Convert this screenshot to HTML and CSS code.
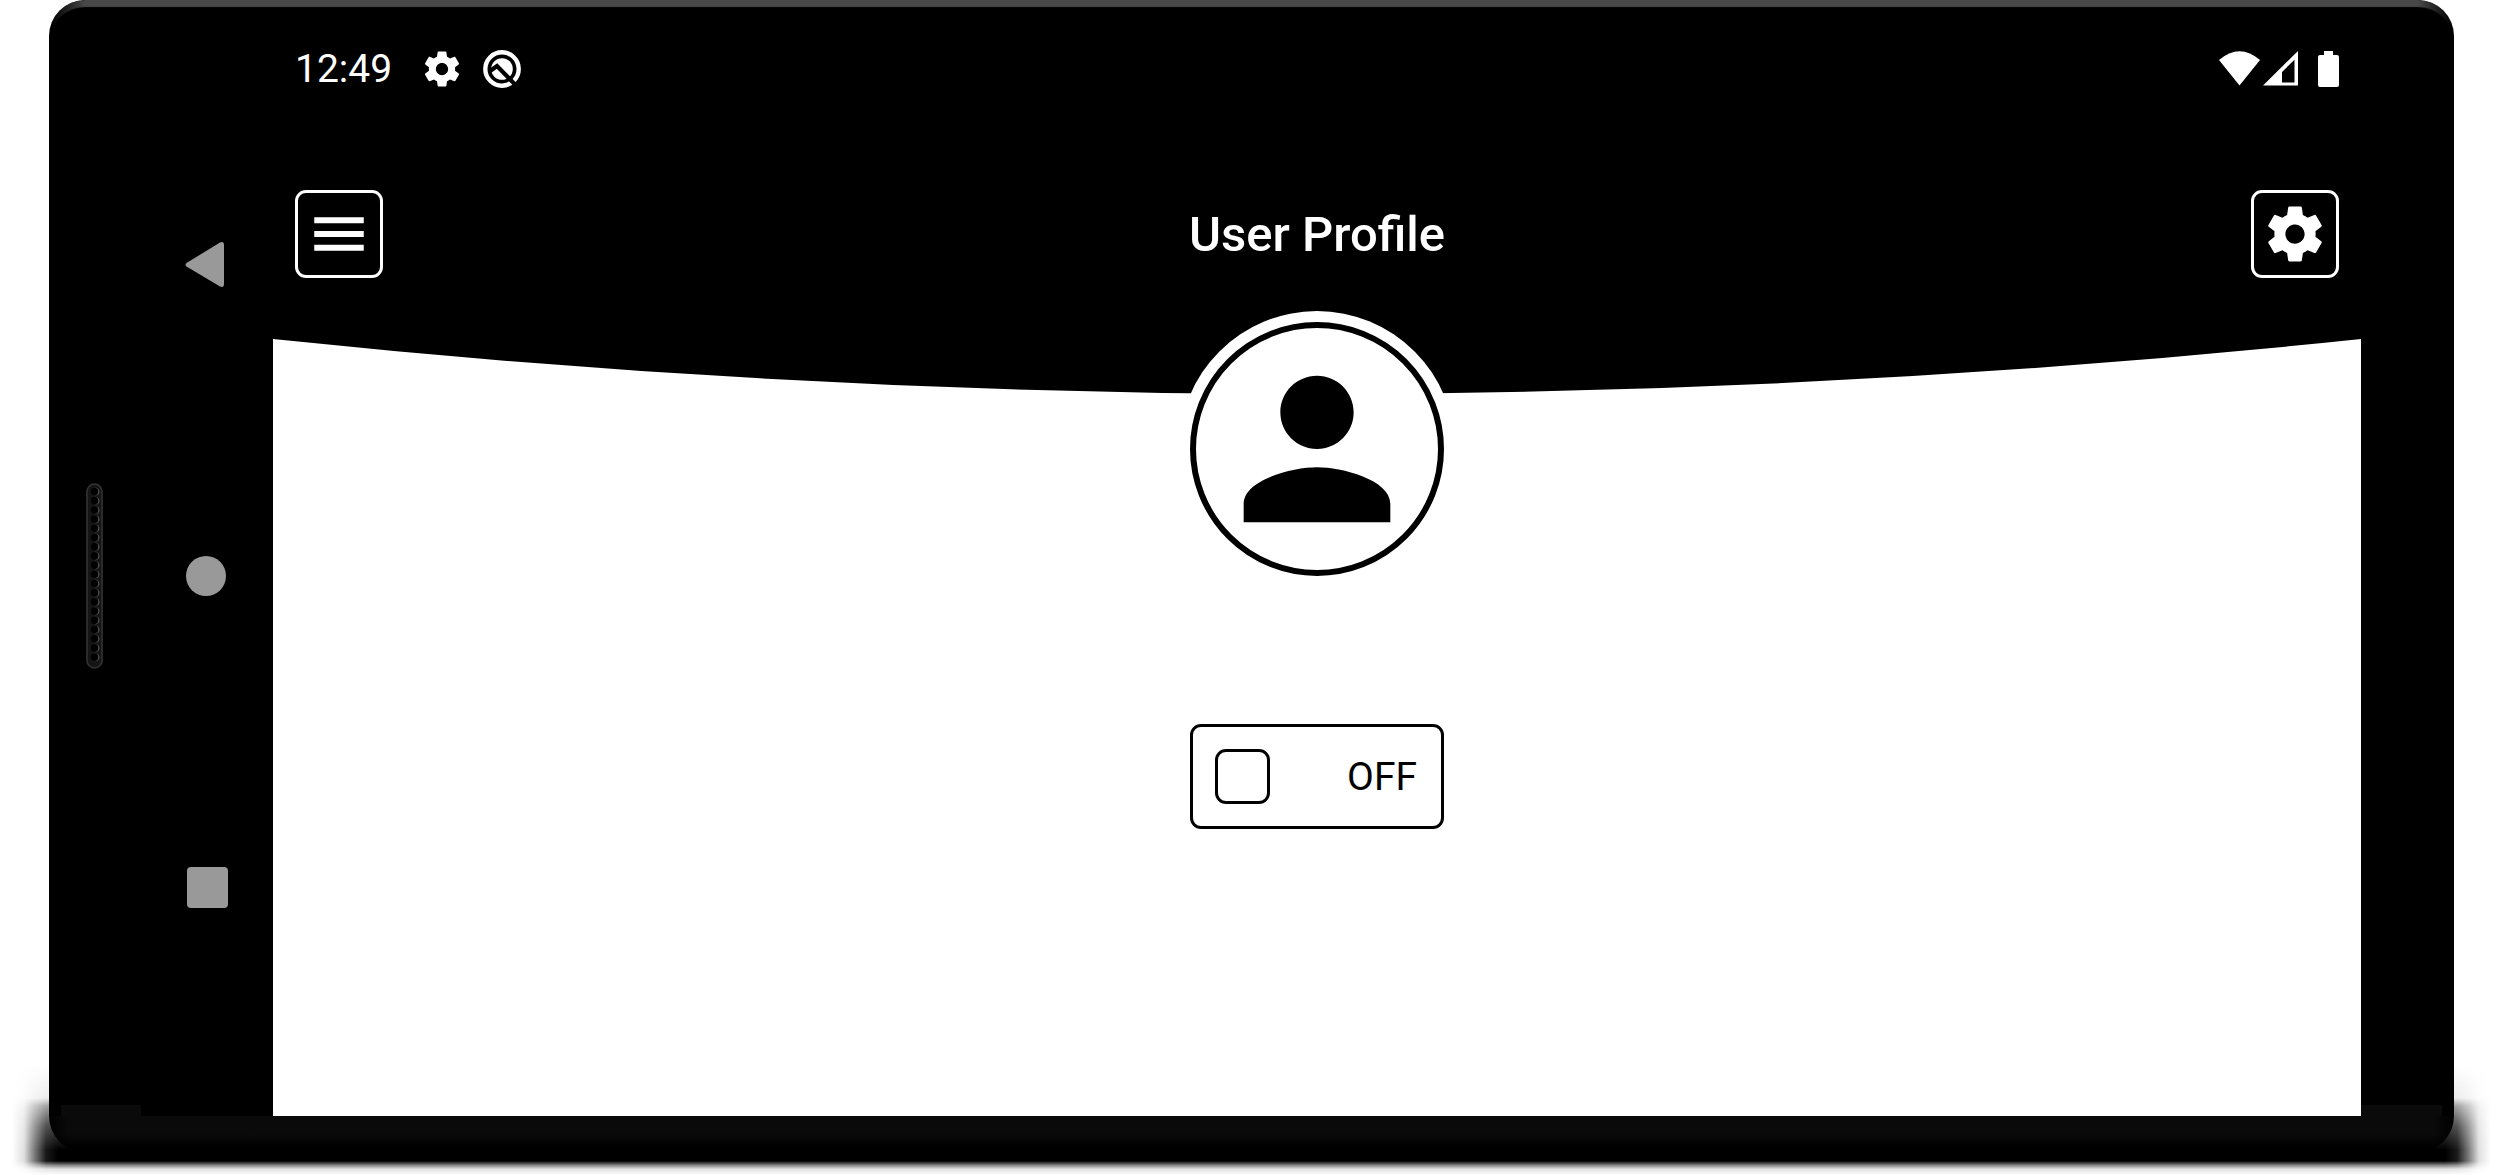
FILE: index.html
```html
<!DOCTYPE html>
<html lang="en">
<head>
<meta charset="utf-8">
<title>User Profile</title>
<link rel="stylesheet" href="styles.css">
</head>
<body>
<svg class="sprite" aria-hidden="true">
  <symbol id="gear" viewBox="0 0 24 24"><path d="M19.43 12.98c.04-.32.07-.64.07-.98s-.03-.66-.07-.98l2.11-1.65c.19-.15.24-.42.12-.64l-2-3.46c-.12-.22-.39-.3-.61-.22l-2.49 1c-.52-.4-1.08-.73-1.69-.98l-.38-2.65C14.46 2.18 14.25 2 14 2h-4c-.25 0-.46.18-.49.42l-.38 2.65c-.61.25-1.17.59-1.69.98l-2.49-1c-.23-.09-.49 0-.61.22l-2 3.46c-.13.22-.07.49.12.64l2.11 1.65c-.04.32-.07.65-.07.98s.03.66.07.98l-2.11 1.65c-.19.15-.24.42-.12.64l2 3.46c.12.22.39.3.61.22l2.49-1c.52.4 1.08.73 1.69.98l.38 2.65c.03.24.24.42.49.42h4c.25 0 .46-.18.49-.42l.38-2.65c.61-.25 1.17-.59 1.69-.98l2.49 1c.23.09.49 0 .61-.22l2-3.46c.12-.22.07-.49-.12-.64l-2.11-1.65zM12 15.5c-1.93 0-3.5-1.57-3.5-3.5s1.57-3.5 3.5-3.5 3.5 1.57 3.5 3.5-1.57 3.5-3.5 3.5z"/></symbol>
</svg>
<div class="shadow"></div>
<div class="device">
  <div class="bezel bezel-left">
    <svg class="speaker" viewBox="0 0 17 186" aria-hidden="true">
      <defs>
        <pattern id="holes" x="0" y="4" width="17" height="9.2" patternUnits="userSpaceOnUse">
          <circle cx="9.4" cy="4.6" r="4" fill="#666"/>
          <circle cx="8.6" cy="4.6" r="3.8" fill="#000"/>
        </pattern>
      </defs>
      <rect x="1" y="1" width="15" height="184" rx="7.5" fill="#151515" stroke="#333" stroke-width="1.6"/>
      <rect x="0" y="4" width="17" height="174.8" fill="url(#holes)"/>
    </svg>
  </div>
  <nav class="system-nav" aria-label="System">
    <button class="nav-button" aria-label="Back"><svg class="nav-icon" viewBox="0 0 44 46"><path d="M1.500 22 L35 1.500 Q39 0 39 4 V43 Q39 47 35 45.500 L1.500 25.500 Q-.5 23.700 1.500 22Z"/></svg></button>
    <button class="nav-button" aria-label="Home"><svg class="nav-icon" viewBox="0 0 44 46"><circle cx="21" cy="23" r="20"/></svg></button>
    <button class="nav-button" aria-label="Recent apps"><svg class="nav-icon" viewBox="0 0 44 46"><rect x="2" y="2" width="41" height="41" rx="4"/></svg></button>
  </nav>
  <main class="screen">
    <header class="header">
      <div class="status-bar">
        <time class="clock">12:49</time>
        <svg class="status-gear"><use href="#gear"/></svg>
        <svg class="status-app" viewBox="0 0 38 38">
          <circle cx="19" cy="19" r="16.700" fill="none" stroke="#fff" stroke-width="4.400"/>
          <circle cx="19" cy="19" r="10.800" fill="#fff"/>
          <path d="M6.500 21.500 L14 16 L33 35.500" fill="none" stroke="#000" stroke-width="4.200"/>
        </svg>
        <svg class="status-system" viewBox="0 0 120 36">
          <path d="M0 9 Q20.500 -8.500 41 9 L20.500 34.500Z"/>
          <path fill-rule="evenodd" d="M44 34.500 L79 0 V34.500Z M63 31.500 H75.500 V8.800 L63 21Z"/>
          <path d="M105 0 H114 V4 H118 Q120 4 120 6 V34 Q120 36 118 36 H101 Q99 36 99 34 V6 Q99 4 101 4 H105Z"/>
        </svg>
      </div>
      <div class="app-bar">
        <button class="icon-button" aria-label="Menu"><svg class="icon" viewBox="0 0 24 24"><path d="M3 18.100h18v-2.200H3v2.200zm0-5h18v-2.200H3v2.200zm0-7.200v2.200h18V5.900H3z"/></svg></button>
        <h1 class="title">User Profile</h1>
        <button class="icon-button" aria-label="Settings"><svg class="icon"><use href="#gear"/></svg></button>
      </div>
    </header>
    <svg class="curve" viewBox="0 0 100 55" preserveAspectRatio="none" aria-hidden="true"><path d="M0 0 Q50 110 100 0Z"/></svg>
    <div class="avatar">
      <div class="avatar-ring">
        <svg class="person" viewBox="0 0 24 24" role="img" aria-label="Profile picture"><path d="M12 12c2.210 0 4-1.790 4-4s-1.790-4-4-4-4 1.790-4 4 1.790 4 4 4zm0 2c-2.670 0-8 1.340-8 4v2h16v-2c0-2.660-5.330-4-8-4z"/></svg>
      </div>
    </div>
    <label class="toggle"><input class="toggle-box" type="checkbox"><span>OFF</span></label>
  </main>
  <div class="bezel"></div>
  <div class="chin"></div>
</div>
</body>
</html>
```
FILE: styles.css
```css
* { box-sizing: border-box; }

body {
  margin: 0;
  min-height: 100vh;
  padding: 0 49px 23px;
  display: flex;
  position: relative;
  background: #fff;
  font-family: Roboto, "Liberation Sans", sans-serif;
}

.sprite { position: absolute; width: 0; height: 0; }

/* Ground shadow that spills out under the phone */
.shadow {
  position: absolute;
  left: 12px;
  right: 12px;
  bottom: 0;
  height: 115px;
  background: #000;
  -webkit-mask-image:
    linear-gradient(to right, transparent, rgba(0,0,0,.12) 12px, rgba(0,0,0,.5) 22px, rgba(0,0,0,.9) 34px, #000 46px, #000 calc(100% - 46px), rgba(0,0,0,.9) calc(100% - 34px), rgba(0,0,0,.5) calc(100% - 22px), rgba(0,0,0,.12) calc(100% - 12px), transparent),
    linear-gradient(to bottom, transparent 5px, rgba(0,0,0,.08) 38px, rgba(0,0,0,.4) 46px, rgba(0,0,0,.75) 66px, #000 90px, #000 101px, rgba(0,0,0,.5) 105px, rgba(0,0,0,.12) 109px, transparent 115px);
  mask-composite: intersect;
}

.device {
  flex: 1;
  position: relative;
  display: grid;
  grid-template-columns: 92px 132px 1fr 93px;
  grid-template-rows: 1fr 36px;
  overflow: hidden;
  border-radius: 36px;
  background: #000;
}

/* Lit top edge, fading away round the corners */
.device::before {
  content: "";
  position: absolute;
  inset: 0;
  border-radius: 36px;
  box-shadow: inset 0 7px 1px #484848;
  -webkit-mask-image: linear-gradient(to right, transparent 2px, #000 36px, #000 calc(100% - 36px), transparent calc(100% - 2px));
  pointer-events: none;
}

.bezel {
  background: linear-gradient(#0a0a0a, #0a0a0a) left bottom / calc(100% - 12px) 11px no-repeat;
}

.bezel-left {
  display: flex;
  align-items: center;
  justify-content: center;
  padding: 36px 2px 0 0;
  background-position: right bottom;
}

.speaker { width: 17px; height: 186px; }

.system-nav {
  display: flex;
  flex-direction: column;
  align-items: center;
  justify-content: center;
  gap: 112px;
  padding-top: 36px;
}

.nav-button {
  width: 100px;
  height: 200px;
  padding: 0;
  border: 0;
  background: none;
  display: flex;
  align-items: center;
  justify-content: center;
}

.nav-icon { width: 44px; height: 46px; fill: #999; }

.screen {
  display: flex;
  flex-direction: column;
  align-items: center;
  background: #fff;
}

.header {
  align-self: stretch;
  padding: 36px 22px 61px;
  background: #000;
  color: #fff;
}

.status-bar {
  display: flex;
  align-items: center;
  height: 66px;
  margin-bottom: 88px;
  fill: #fff;
}

.clock { font-size: 39px; line-height: 46px; }
.status-gear { width: 42px; height: 42px; margin-left: 29px; }
.status-app { width: 38px; height: 38px; margin-left: 20px; }
.status-system { width: 120px; height: 36px; margin-left: auto; }

.app-bar {
  display: flex;
  align-items: center;
  justify-content: space-between;
}

.icon-button {
  width: 88px;
  height: 88px;
  padding: 0;
  display: flex;
  align-items: center;
  justify-content: center;
  border: 3px solid #fff;
  border-radius: 11px;
  background: none;
}

.icon { width: 66px; height: 66px; fill: #fff; }

.title {
  margin: 0;
  font-size: 49px;
  line-height: 59px;
  font-weight: 500;
}

.curve { display: block; width: 100%; height: 55px; fill: #000; }

.avatar {
  margin-top: -83px;
  padding: 11px;
  border-radius: 50%;
  background: #fff;
  position: relative;
}

.avatar-ring {
  width: 254px;
  height: 254px;
  display: flex;
  align-items: center;
  justify-content: center;
  border: 6px solid #000;
  border-radius: 50%;
}

.person { flex: none; width: 220px; height: 220px; }

.toggle {
  width: 254px;
  height: 105px;
  margin-top: 137px;
  padding: 0 24px 0 22px;
  display: flex;
  align-items: center;
  justify-content: space-between;
  border: 3px solid #000;
  border-radius: 11px;
  font-size: 39px;
  line-height: 46px;
  color: #000;
}

.toggle-box {
  appearance: none;
  width: 55px;
  height: 55px;
  margin: 0;
  border: 3px solid #000;
  border-radius: 11px;
}

.toggle-box:checked { background: #000; }

.chin {
  grid-column: 1 / -1;
  background: linear-gradient(#0a0a0a 50%, #000 85%);
  -webkit-mask-image: linear-gradient(to right, transparent, #000 20px, #000 calc(100% - 20px), transparent);
}
```
